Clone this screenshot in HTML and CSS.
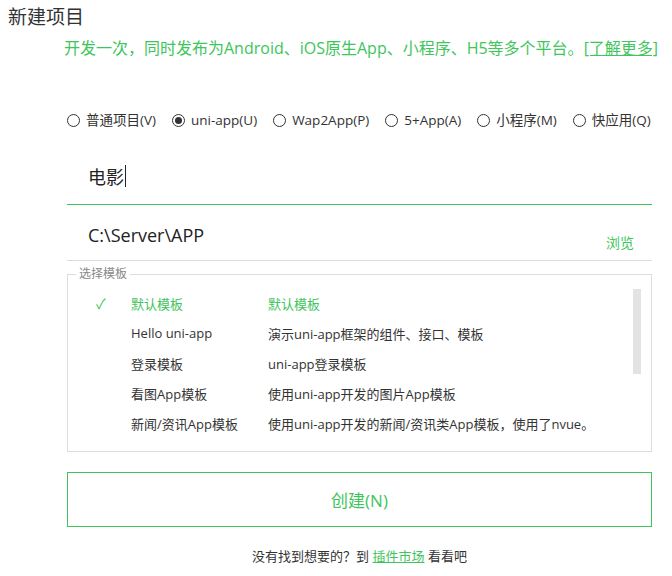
FILE: index.html
```html
<!DOCTYPE html>
<html lang="zh">
<head>
<meta charset="utf-8">
<link rel="stylesheet" href="styles.css">
</head>
<body>
<div class="page">
  <h1 class="title">新建项目</h1>
  <p class="desc">开发一次，同时发布为Android、iOS原生App、小程序、H5等多个平台。<a class="more">[了解更多]</a></p>

  <div class="radios">
    <label class="radio"><span class="dot"></span>普通项目(V)</label>
    <label class="radio"><span class="dot on"></span>uni-app(U)</label>
    <label class="radio"><span class="dot"></span>Wap2App(P)</label>
    <label class="radio"><span class="dot"></span>5+App(A)</label>
    <label class="radio"><span class="dot"></span>小程序(M)</label>
    <label class="radio"><span class="dot"></span>快应用(Q)</label>
  </div>

  <div class="form">
    <div class="field name"><span class="val">电影</span><span class="caret"></span></div>
    <div class="field path"><span class="val">C:\Server\APP</span><span class="browse">浏览</span></div>

    <fieldset class="tpl">
      <legend>选择模板</legend>
      <div class="rows">
        <div class="row sel"><span class="chk">✓</span><span class="c1">默认模板</span><span class="c2">默认模板</span></div>
        <div class="row"><span class="chk"></span><span class="c1">Hello uni-app</span><span class="c2">演示uni-app框架的组件、接口、模板</span></div>
        <div class="row"><span class="chk"></span><span class="c1">登录模板</span><span class="c2">uni-app登录模板</span></div>
        <div class="row"><span class="chk"></span><span class="c1">看图App模板</span><span class="c2">使用uni-app开发的图片App模板</span></div>
        <div class="row"><span class="chk"></span><span class="c1">新闻/资讯App模板</span><span class="c2">使用uni-app开发的新闻/资讯类App模板，使用了nvue。</span></div>
      </div>
      <div class="scroll"></div>
    </fieldset>

    <button class="create">创建(N)</button>

    <p class="foot">没有找到想要的？到 <a class="market">插件市场</a> 看看吧</p>
  </div>
</div>
</body>
</html>
```

FILE: styles.css
```css
* { box-sizing: border-box; }
html, body { margin: 0; padding: 0; background: #fff; }
body {
  font-family: "Open Sans", "Noto Sans CJK SC", sans-serif;
  color: #333;
  width: 672px;
  height: 576px;
  overflow: hidden;
}
.page { position: relative; }
.title {
  margin: 0;
  padding: 4px 0 0 8px;
  font-size: 19px;
  font-weight: normal;
  line-height: 26px;
  color: #333;
}
.desc {
  margin: 8px 0 0 0;
  padding-left: 64px;
  font-size: 16px;
  line-height: 20px;
  color: #3ec55b;
  white-space: nowrap;
}
.more { color: #3ec55b; text-decoration: underline; }
.radios {
  display: flex;
  margin: 53px 0 0 67px;
  gap: 16px;
  font-size: 13.5px;
  line-height: 18px;
}
.radio { display: flex; align-items: center; gap: 6px; white-space: nowrap; }
.dot {
  width: 13px; height: 13px;
  border: 1px solid #333;
  border-radius: 50%;
  display: flex; align-items: center; justify-content: center;
}
.dot.on::after {
  content: "";
  width: 7px; height: 7px;
  border-radius: 50%;
  background: #333;
}
.form { margin: 0 20px 0 67px; }
.field {
  display: flex;
  align-items: center;
  padding-left: 21px;
  font-size: 18px;
  color: #222;
}
.name {
  height: 76px;
  padding-top: 18px;
  border-bottom: 1px solid #3ec55b;
}
.caret { display: inline-block; width: 1px; height: 22px; background: #222; margin-left: 1px; }
.path {
  height: 56px;
  border-bottom: 1px solid #ddd;
  justify-content: space-between;
  padding-right: 18px;
  padding-top: 4px;
}
.browse {
  font-size: 14px;
  color: #3ec55b;
  margin-top: 14px;
}
.tpl {
  position: relative;
  margin: 6px 0 0 0;
  padding: 7px 0 13px 0;
  border: 1px solid #ddd;
  min-width: 0;
}
.tpl legend {
  margin-left: 8px;
  padding: 0 3px;
  font-size: 12px;
  color: #888;
  line-height: 14px;
}
.rows { display: flex; flex-direction: column; }
.row {
  display: flex;
  align-items: center;
  height: 30px;
  font-size: 13px;
  color: #333;
  white-space: nowrap;
}
.row.sel { color: #3ec55b; }
.chk { width: 63px; padding-left: 28px; color: #3ec55b; font-size: 14px; }
.c1 { width: 137px; }
.scroll {
  position: absolute;
  right: 10px;
  top: 8px;
  width: 8px;
  height: 85px;
  background: #e3e3e3;
}
.create {
  display: block;
  width: 100%;
  height: 55px;
  margin-top: 20px;
  background: #fff;
  border: 1px solid #3ec55b;
  color: #3ec55b;
  font-family: inherit;
  font-size: 17px;
  cursor: pointer;
}
.foot {
  margin: 20px 0 0 0;
  text-align: center;
  font-size: 13px;
  line-height: 18px;
  color: #333;
}
.market { color: #3ec55b; text-decoration: underline; }
```
